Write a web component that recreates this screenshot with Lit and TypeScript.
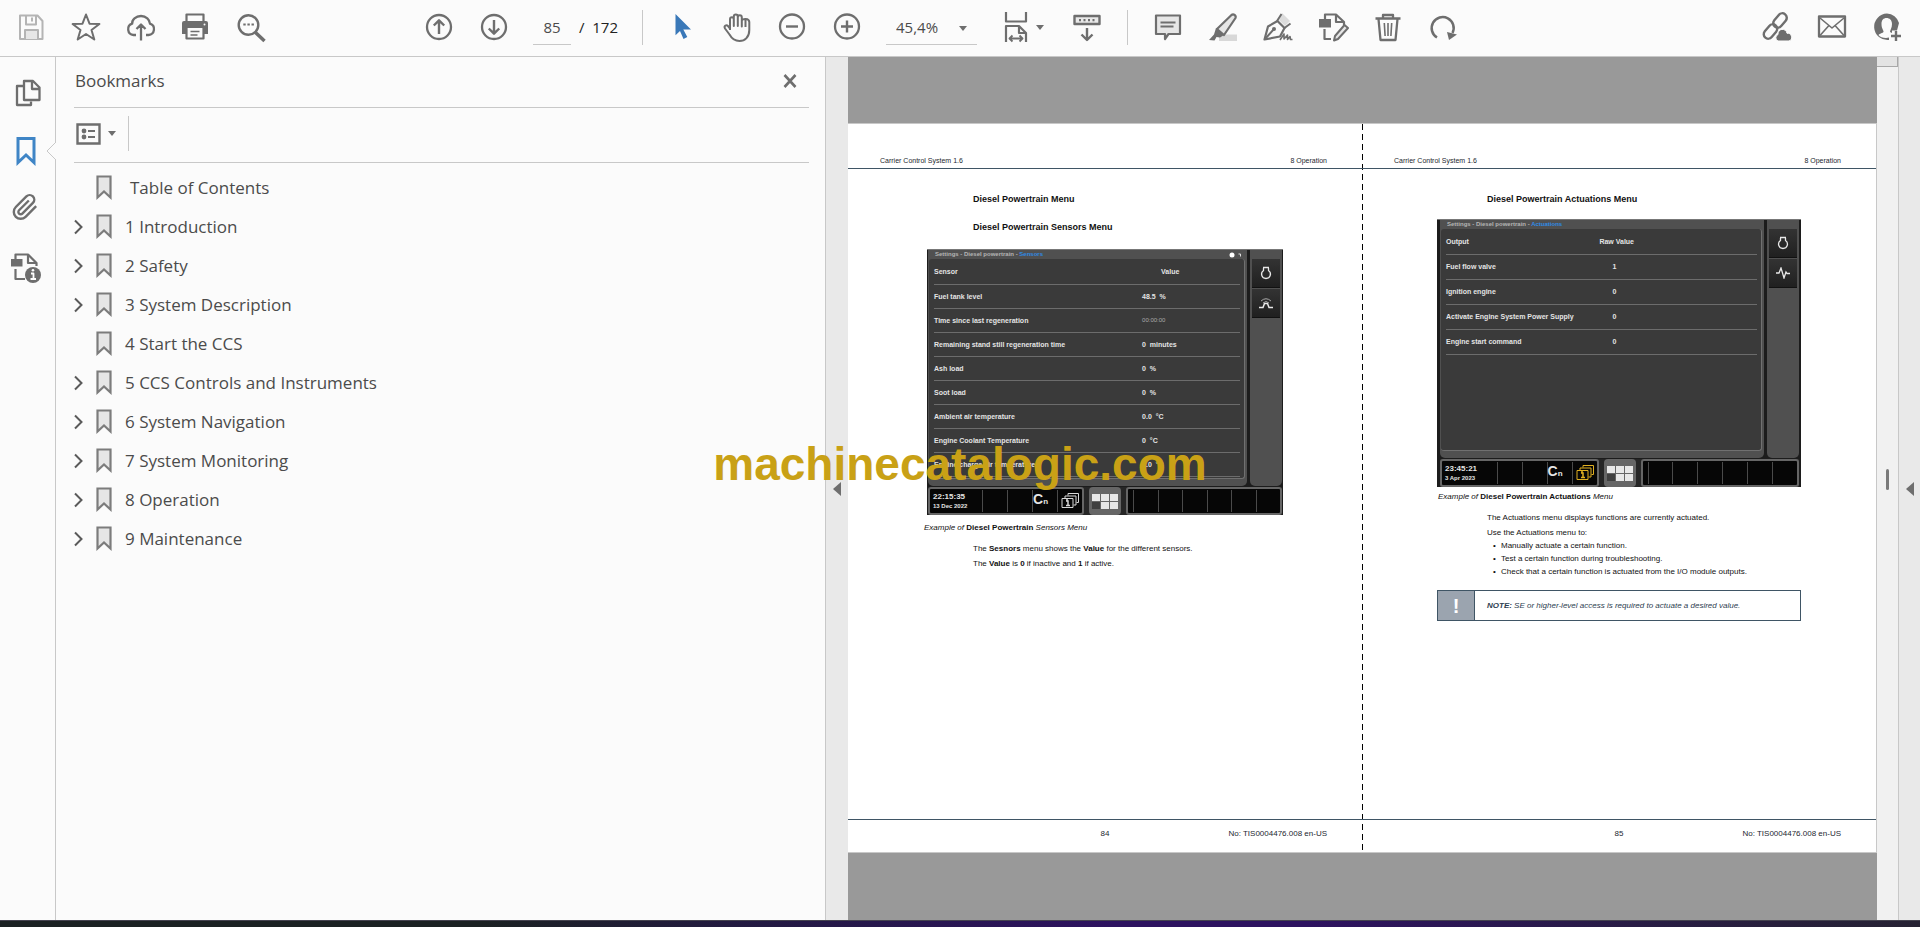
import { LitElement, html, css, svg, nothing } from "lit";
import { customElement, property } from "lit/decorators.js";
import { classMap } from "lit/directives/class-map.js";

/* ---------- icon set, 32 x 32 grid ---------- */
const icons: Record<string, unknown> = {
  save: svg`<g stroke="#b4b4b4" stroke-width="2" fill="none"><path d="M5 4.500h17.500l5 5.500v18H5z"/><path d="M11 4.500v9h10v-9M17 6.500v4"/><path d="M10 28v-9h13v9" fill="#e6e6e6"/></g>`,
  star: svg`<path d="M16 3.500l3.500 9.200 9.900.3-7.900 6 2.800 9.500L16 23l-8.300 5.500 2.800-9.500-7.900-6 9.900-.3z" stroke-width="2"/>`,
  cloud: svg`<path d="M11 24H8.500a5.800 5.800 0 0 1-1.300-11.300C6.600 8.500 11 5 16 5s8.800 3.500 9 7.700A5.800 5.800 0 0 1 23.500 24H21M16 29.500V14M11.500 18l4.500-4.500 4.500 4.500" stroke-width="2.300"/>`,
  print: svg`<path d="M6.500 10V3.500h17V10" stroke-width="2.200"/><path d="M2 12q0-2 2-2h22q2 0 2 2v11h-4.500v-6h-17v6H2z" fill="#6e6e6e" stroke="none"/><path d="M6.500 17v10.500h17V17" stroke-width="2.200"/><path d="M10.500 20.500h9M10.500 24h7" stroke-width="1.600"/><circle cx="24.500" cy="13.500" r="1" fill="#fbfbfb" stroke="none"/>`,
  search: svg`<circle cx="13.500" cy="14" r="9.800" stroke-width="2.400"/><path d="M20.500 21.500l9 8.500" stroke-width="3.500"/><path d="M8.300 13.500h2.400m1.700 0h2.400m1.700 0h2.400" stroke-width="2.200"/>`,
  up: svg`<circle cx="16" cy="16" r="12" stroke-width="2.300"/><path d="M16 23V9.500M10.800 14.500L16 9.300l5.200 5.200" stroke-width="2.400"/>`,
  down: svg`<circle cx="16" cy="16" r="12" stroke-width="2.300"/><path d="M16 9v13.500M10.800 17.500l5.200 5.200 5.200-5.200" stroke-width="2.400"/>`,
  cursor: svg`<path d="M9.500 3l15.500 15.500h-7.700l4 7.500-3.800 2-3.500-8-4.500 4.200z" fill="#3a78b8" stroke="none"/>`,
  hand: svg`<path d="M9 19V8.500c0-3 3.800-3 3.800 0V15V5.800c0-3 4-3 4 0V15V6.500c0-3 4-3 4 0V15.500V10c0-2.900 7.500-2.900 7.500 1v8c0 7-4.300 11-9.800 11-5 0-7.800-2.500-10-6.500L4 17.500c-1.500-3 1.500-4 3.200-2.200L9 17.500M24.500 9v7" stroke-width="2"/>`,
  minus: svg`<circle cx="16" cy="15.500" r="12" stroke-width="2.300"/><path d="M10 15.500h12" stroke-width="2.400"/>`,
  plus: svg`<circle cx="16" cy="15.500" r="12" stroke-width="2.300"/><path d="M10 15.500h12M16 9.500v12" stroke-width="2.400"/>`,
  fit: svg`<path d="M6 1v9.500h20V1M6 31V15h13l7 7v9M19 15v7h7" stroke-width="2.200"/><path d="M9.500 27.500h13M12.500 24.500l-3 3 3 3M19.500 24.500l3 3-3 3" stroke-width="1.800"/>`,
  keys: svg`<path d="M3.500 5h25v8h-25z" fill="#e9e9e9" stroke-width="2.400"/><path d="M8 9.200h2m2.500 0h2m2.500 0h2m2.500 0h2" stroke-width="2.200"/><path d="M16 17v11.500M10.500 23.500L16 29l5.500-5.500" stroke-width="2.400"/>`,
  comment: svg`<path d="M4 4.500h24v18.500H16.500L13 28v-5H4z" fill="#e6e6e6" stroke-width="2.200"/><path d="M8.500 11.500h15M8.500 15.500h13" stroke-width="1.800"/>`,
  marker: svg`<path d="M12 23.500h18V30H12z" fill="#d8d8d8" stroke="none"/><path d="M10 18L24.500 4c2-1.500 5 .5 4 3L17 24z" fill="#e6e6e6" stroke-width="2.200"/><path d="M9 17l8 7-4 2.500-3.500-.5-2 3.500L2 29l5-5.500z" fill="#6e6e6e" stroke="none"/>`,
  sign: svg`<path d="M20 2l8 8-5 5-6-6z" fill="#dcdcdc" stroke="none"/><path d="M2.500 28.500L6 15.500 15.500 10l7 7L18 25.500z" fill="#fbfbfb" stroke-width="2.200"/><path d="M3 28l8.500-9.500M15 10l4.500-7M22.500 17l6-4.500" stroke-width="2"/><circle cx="12" cy="18" r="2" fill="#6e6e6e" stroke="none"/><path d="M18 29l4-6v5l3.500-4v4.500l2.500-3 .5 3h2" stroke-width="1.600"/>`,
  edit: svg`<path d="M8 8V3.500h11L27 11v3M19 4v7h7M7.500 18v10H14" stroke-width="2.200"/><path d="M2 8h12v8.500H2z" fill="#6e6e6e" stroke="none"/><path d="M17 29.500l1-4.500L27.500 14l3.500 3L21 28z" fill="#e6e6e6" stroke-width="2"/>`,
  trash: svg`<path d="M3.500 7.500h25M11 7V4h10v3M6.500 8l2 21h15l2-21" stroke-width="2.300"/><path d="M12.300 12l.8 13M16 12v13M19.700 12l-.8 13" stroke-width="1.600"/>`,
  rotate: svg`<path d="M10 26.500A11 11 0 1 1 25.500 22" stroke-width="2.500"/><path d="M20 21l10 2.500-8 5.500z" fill="#6e6e6e" stroke="none"/>`,
  link: svg`<g stroke-width="2.400"><rect x="-4.500" y="-8" width="9" height="16" rx="4.500" transform="translate(19 9.500) rotate(40)"/><rect x="-4.500" y="-8" width="9" height="16" rx="4.500" transform="translate(9.500 20.500) rotate(40)"/></g><path d="M17 30a3.500 3.500 0 0 1 0-6.500 4.500 4.500 0 0 1 9-1.200A4 4 0 0 1 28 30z" fill="#6e6e6e" stroke="#fbfbfb" stroke-width="1"/>`,
  mail: svg`<path d="M3 5.500h26v20H3z" stroke-width="2.300"/><path d="M4 7l12 10L28 7M4 24.500L12.500 15M28 24.500L19.500 15" stroke-width="1.600"/>`,
  person: svg`<path d="M16 2.500a13.300 13.300 0 1 0 2 26.500v-2.500L15 27c-3 0-6.500-1-7.500-3 1-1.500 4.500-2 5-3 .5-1.500-2-3-2-8 0-4 2-6 5-6s5.500 2 5.500 6c0 4-2 6-2 8l2 1v-2.500h5L28 12A13.300 13.300 0 0 0 16 2.500z" fill="#6e6e6e" stroke="none"/><path d="M25 20v10M20 25h10" stroke-width="2.400"/>`,
  pages: svg`<path d="M12 9H5v19h14v-3.500" stroke-width="2.300"/><path d="M12 4h9l6.500 6.500V23H12zM20 4.500V12h7" stroke-width="2.300"/>`,
  mark: svg`<path d="M8 3.500h16v24l-8-7.500-8 7.500z" stroke="#3f85c6" stroke-width="3" stroke-linejoin="miter"/>`,
  clip: svg`<path transform="translate(1.500 .5) scale(1.150)" d="M21.440 11.050l-9.190 9.190a6 6 0 0 1-8.490-8.490l9.190-9.190a4 4 0 0 1 5.660 5.660l-9.200 9.190a2 2 0 0 1-2.830-2.830l8.490-8.480" stroke-width="2.100"/>`,
  info: svg`<path d="M5.500 8V3.500H18L26.500 12v3M18 4v8h8M5.500 18v10H15" stroke-width="2.200"/><path d="M1 8h11.500v7.500H1z" fill="#6e6e6e" stroke="none"/><circle cx="23" cy="24" r="8" fill="#6e6e6e" stroke="none"/><path d="M21 22.500h2.500V28M20.500 28h5.500" stroke="#fff" stroke-width="1.800"/><circle cx="23" cy="19.300" r="1.300" fill="#fff" stroke="none"/>`,
};

const icon = (name: string) => html`<svg
  class="icon" width="32" height="32" viewBox="0 0 32 32" fill="none" stroke="#6e6e6e"
  stroke-linejoin="round" aria-hidden="true">${icons[name]}</svg>`;

const caret = html`<svg class="caret" width="8" height="5" viewBox="0 0 8 5" aria-hidden="true"><path d="M0 0h8L4 5z" fill="#6e6e6e"/></svg>`;

const base = css`
  * { box-sizing: border-box; }
  button {
    appearance: none; border: 0; margin: 0; padding: 0; background: none;
    font: inherit; color: inherit; cursor: pointer;
    display: flex; align-items: center; justify-content: center;
  }
  svg { display: block; flex: none; }
`;

/* ---------- top toolbar ---------- */
@customElement("pdf-toolbar")
class PdfToolbar extends LitElement {
  static styles = [base, css`
    :host {
      display: flex; align-items: center; height: 57px;
      padding: 0 17px 2px 15px; background: #fbfbfb;
      border-bottom: 1px solid #c8c8c8; font-size: 15px;
    }
    .group { display: flex; align-items: center; gap: 23px; }
    .nav { margin-left: 156px; }
    .share { margin-left: auto; }
    .page { display: flex; align-items: center; gap: 8px; padding-right: 1px; }
    .number, .zoom select {
      appearance: none; height: 35px; margin: 0; border: 0; border-radius: 0;
      border-bottom: 1px solid #c8c8c8; background: none; outline: 0;
      font: inherit; color: #4b4b4b;
    }
    .number { width: 38px; padding: 0; text-align: center; }
    .total { white-space: pre; color: #222; }
    .bar { width: 1px; height: 35px; background: #c8c8c8; }
    .edge { margin: 0 1px; }
    .zoom { position: relative; }
    .zoom select { width: 91px; padding: 0 24px 0 10px; }
    .zoom .caret { position: absolute; right: 10px; top: 16px; pointer-events: none; }
    .split { width: 48px; gap: 4px; justify-content: flex-start; }
  `];

  private tool(name: string, label: string) {
    return html`<button class="tool" aria-label=${label}>${icon(name)}</button>`;
  }

  render() {
    return html`
      <div class="group">
        ${this.tool("save", "Save")}${this.tool("star", "Star")}
        ${this.tool("cloud", "Upload")}${this.tool("print", "Print")}
        ${this.tool("search", "Find")}
      </div>
      <div class="group nav">
        ${this.tool("up", "Previous page")}${this.tool("down", "Next page")}
        <div class="page">
          <input class="number" aria-label="Page number" value="85" />
          <span class="total">/  172</span>
        </div>
        <div class="bar"></div>
        ${this.tool("cursor", "Select")}${this.tool("hand", "Pan")}
        ${this.tool("minus", "Zoom out")}${this.tool("plus", "Zoom in")}
        <div class="zoom">
          <select aria-label="Zoom level"><option>45,4%</option></select>
          ${caret}
        </div>
        <button class="split" aria-label="Fit width">${icon("fit")}${caret}</button>
        ${this.tool("keys", "Scrolling")}
        <div class="bar edge"></div>
        ${this.tool("comment", "Comment")}${this.tool("marker", "Highlight")}
        ${this.tool("sign", "Sign")}${this.tool("edit", "Edit PDF")}
        ${this.tool("trash", "Delete")}${this.tool("rotate", "Rotate")}
      </div>
      <div class="group share">
        ${this.tool("link", "Share link")}${this.tool("mail", "Send by email")}
        ${this.tool("person", "Account")}
      </div>
    `;
  }
}

/* ---------- icon rail and bookmark tree ---------- */
interface Bookmark { title: string; open: boolean; indent?: boolean; }

const bookmarks: Bookmark[] = [
  { title: "Table of Contents", open: false, indent: true },
  { title: "1 Introduction", open: true },
  { title: "2 Safety", open: true },
  { title: "3 System Description", open: true },
  { title: "4 Start the CCS", open: false },
  { title: "5 CCS Controls and Instruments", open: true },
  { title: "6 System Navigation", open: true },
  { title: "7 System Monitoring", open: true },
  { title: "8 Operation", open: true },
  { title: "9 Maintenance", open: true },
];

@customElement("side-rail")
class SideRail extends LitElement {
  static styles = [base, css`
    :host {
      display: flex; flex-direction: column; padding-top: 7px;
      background: #fbfbfb; border-right: 1px solid #c8c8c8;
    }
    .item { position: relative; height: 58px; padding-right: 4px; }
    .wide { padding-right: 0; }
    .notch { position: absolute; right: -1px; top: 20px; }
  `];
  render() {
    return html`
      <button class="item wide" aria-label="Page thumbnails">${icon("pages")}</button>
      <button class="item" aria-label="Bookmarks">${icon("mark")}
        <svg class="notch" width="10" height="18" viewBox="0 0 10 18"><path d="M10 0L1 9l9 9" fill="#fbfbfb" stroke="#c8c8c8"/></svg>
      </button>
      <button class="item" aria-label="Attachments">${icon("clip")}</button>
      <button class="item" aria-label="Document information">${icon("info")}</button>
    `;
  }
}

@customElement("bookmark-panel")
class BookmarkPanel extends LitElement {
  static styles = [base, css`
    :host {
      display: block; overflow: hidden; background: #fbfbfb; color: #4b4b4b;
      border-right: 1px solid #c8c8c8; padding: 0 16px 0 18px; font-size: 17px;
    }
    .head {
      display: flex; align-items: center; justify-content: space-between;
      height: 51px; padding: 0 12px 2px 1px; border-bottom: 1px solid #c8c8c8;
    }
    h2 { margin: 0; font-size: 17px; font-weight: 400; }
    .tools {
      display: flex; align-items: center; gap: 12px; height: 55px;
      padding: 0 2px 3px; border-bottom: 1px solid #c8c8c8;
    }
    .options { gap: 7px; }
    .bar { width: 1px; height: 35px; background: #c8c8c8; }
    ul { list-style: none; margin: 0; padding: 5px 0 0; }
    li { display: flex; align-items: center; height: 39px; }
    .toggle { width: 22px; height: 24px; justify-content: flex-start; }
    .entry {
      display: flex; align-items: center; gap: 13px;
      color: inherit; text-decoration: none; white-space: nowrap;
    }
    .indent { gap: 18px; }
  `];
  render() {
    return html`
      <div class="head">
        <h2>Bookmarks</h2>
        <button aria-label="Close"><svg width="14" height="16" viewBox="0 0 14 16"><path d="M1.500 2l11 12M12.500 2l-11 12" stroke="#6e6e6e" stroke-width="2.600"/></svg></button>
      </div>
      <div class="tools">
        <button class="options" aria-label="Options">
          <svg width="25" height="22" viewBox="0 0 25 22"><path d="M1.500 1.500h22v19h-22z" fill="none" stroke="#6e6e6e" stroke-width="2.400"/><circle cx="8" cy="8" r="2.400" fill="#6e6e6e"/><circle cx="8" cy="14" r="2.400" fill="#6e6e6e"/><path d="M12 8h7M12 14h7" stroke="#6e6e6e" stroke-width="2"/></svg>
          ${caret}
        </button>
        <div class="bar"></div>
      </div>
      <ul>
        ${bookmarks.map((b) => html`<li>
          ${b.open
            ? html`<button class="toggle" aria-label="Expand ${b.title}"><svg width="9" height="16" viewBox="0 0 9 16"><path d="M1 1.500L7.500 8 1 14.500" fill="none" stroke="#5a5a5a" stroke-width="2"/></svg></button>`
            : html`<span class="toggle"></span>`}
          <a href="#" class=${classMap({ entry: true, indent: !!b.indent })}>
            <svg width="16" height="25" viewBox="0 0 16 25"><path d="M1.500 1.500h13v21L8 16.500l-6.500 6z" fill="#e6e6e6" stroke="#7c7c7c" stroke-width="2.200"/></svg>
            ${b.title}
          </a>
        </li>`)}
      </ul>
    `;
  }
}

/* ---------- machine display shown in the manual ---------- */
@customElement("machine-display")
class MachineDisplay extends LitElement {
  @property() section = "";
  @property() clock = "";
  @property() date = "";
  @property({ type: Boolean, reflect: true }) actuations = false;
  @property({ attribute: false }) head: string[] = [];
  @property({ attribute: false }) rows: string[][] = [];

  static styles = [base, css`
    :host {
      display: grid; grid-template-columns: minmax(0, 1fr) 32px; grid-template-rows: 1fr 28px;
      gap: 1px 3px; height: 266px; padding: 0 1px; background: #1c1c1c;
      border-top: 1px solid #777; color: #e4e4e4; overflow: hidden;
      font: 700 7px/9px "Liberation Sans", Arial, sans-serif;
    }
    :host([actuations]) { height: 268px; padding: 0 2px 0 3px; }
    .main {
      display: flex; flex-direction: column; padding: 0 2px 7px 1px;
      background: #505050; border-radius: 0 0 5px 5px;
    }
    .title {
      display: flex; align-items: center; justify-content: space-between;
      height: 9px; padding: 0 4px 0 6px; font-size: 6px; color: #b4b4b4; white-space: pre;
    }
    .title em { font-style: normal; color: #2f8be6; }
    .panel {
      flex: 1; padding: 0 4px 0 5px; background: #3a3a3a; border-radius: 3px;
      border: solid #707070; border-width: 0 1px 1px 0;
    }
    table { width: 100%; border-collapse: collapse; }
    thead tr { height: 25px; }
    tbody tr { height: 24px; }
    :host([actuations]) tr { height: 25px; }
    th, td { padding: 0; text-align: left; border-bottom: 1px solid #6c6c6c; white-space: pre; }
    th:first-child, td:first-child { width: 68%; }
    th:last-child { padding-left: 19px; }
    :host([actuations]) th:first-child, :host([actuations]) td:first-child { width: 49%; }
    :host([actuations]) th:last-child { padding-left: 1px; }
    :host([actuations]) td:last-child { padding-left: 14px; }
    td.faint { font-size: 6px; font-weight: 400; color: #aaa; }
    .strip {
      display: flex; flex-direction: column; gap: 1px; padding: 9px 2px 0;
      background: #505050; border-radius: 0 0 5px 5px;
    }
    .key { height: 29px; width: 28px; background: linear-gradient(#333, #202020); border-bottom: 1px solid #111; }
    .bar { grid-column: 1 / -1; display: flex; gap: 5px; background: #262626; }
    .box {
      flex: 1 1 0; display: grid; border: 2px solid #666; border-radius: 3px;
      background: #060606; padding: 1px 0;
    }
    .left { grid-template-columns: minmax(0, 1fr) repeat(4, 25px); }
    .right { grid-template-columns: 5px repeat(6, minmax(0, 1fr)); }
    .cell + .cell { border-left: 1px solid #4a4a4a; }
    .cell { display: flex; align-items: center; justify-content: center; min-width: 0; }
    .time { display: block; padding: 2px 0 0 3px; font-size: 8px; line-height: 10px; white-space: nowrap; }
    .time small { display: block; font-size: 6px; line-height: 8px; }
    .brand { font-size: 14px; align-items: baseline; justify-content: flex-start; line-height: 18px; }
    .brand small { font-size: 8px; }
    .home { flex: 0 0 32px; background: #666; border-radius: 4px; }
  `];

  render() {
    const badge = this.actuations ? "#e0b020" : "#d8d8d8";
    return html`
      <div class="main">
        <div class="title"><span>Settings - Diesel powertrain - <em>${this.section}</em></span>
          ${this.actuations ? nothing : html`<svg width="12" height="6" viewBox="0 0 12 6"><circle cx="3" cy="3" r="2.500" fill="#fff"/><path d="M9.500 2h2v2.500" stroke="#ddd" fill="none"/></svg>`}
        </div>
        <div class="panel">
          <table>
            <thead><tr>${this.head.map((h) => html`<th scope="col">${h}</th>`)}</tr></thead>
            <tbody>
              ${this.rows.map((r) => html`<tr>
                <td>${r[0]}</td>
                <td class=${classMap({ faint: r[1].includes(":") })}>${r[1]}</td>
              </tr>`)}
            </tbody>
          </table>
        </div>
      </div>
      <div class="strip">
        <button class="key" aria-label="Engine"><svg width="12" height="14" viewBox="0 0 12 14"><path d="M3 1.500h6M3.500 2v2.500C0 7 1.500 12.500 6 12.500S12 7 8.500 4.500V2" fill="none" stroke="#e8e8e8" stroke-width="1.300"/></svg></button>
        <button class="key" aria-label="Signals">${this.actuations
          ? html`<svg width="14" height="12" viewBox="0 0 14 12"><path d="M0 6h3l2-5 3 10 2-6 1 1.500h3" fill="none" stroke="#e8e8e8" stroke-width="1.300"/></svg>`
          : html`<svg width="14" height="12" viewBox="0 0 14 12"><path d="M0 10.500h4l1.500-4h3l1.500 4h4" fill="none" stroke="#e8e8e8" stroke-width="1.500"/><path d="M2 4q5-4.500 10 0M4 6q3-3 6 0" fill="none" stroke="#aaa"/></svg>`}</button>
      </div>
      <div class="bar">
        <div class="box left">
          <div class="cell time">${this.clock}<small>${this.date}</small></div>
          <div class="cell"></div><div class="cell"></div>
          <div class="cell brand">C<small>n</small></div>
          <div class="cell"><svg width="18" height="16" viewBox="0 0 18 16" fill="none" stroke=${badge}><path d="M1 5.500h11v9H1zM4 5V3h11v9h-2.500M7 2.500V.5h10.500v9H15.500"/><path d="M5 8h2v4M5 12.500h4M6 6v1.200" stroke-width="1.500"/></svg></div>
        </div>
        <button class="home" aria-label="Home"><svg width="26" height="15" viewBox="0 0 26 15" fill="#e8e8e8"><path d="M0 0h8v7H0zM9 0h8v7H9zM18 0h8v7h-8zM9 8h8v7H9zM18 8h8v7h-8z"/><path d="M0 8h8v7H0z" fill="#404040"/></svg></button>
        <div class="box right">${Array.from({ length: 7 }, () => html`<div class="cell"></div>`)}</div>
      </div>
    `;
  }
}

/* ---------- document spread ---------- */
const sensors = [
  ["Fuel tank level", "48.5  %"],
  ["Time since last regeneration", "00:00:00"],
  ["Remaining stand still regeneration time", "0  minutes"],
  ["Ash load", "0  %"],
  ["Soot load", "0  %"],
  ["Ambient air temperature", "0.0  °C"],
  ["Engine Coolant Temperature", "0  °C"],
  ["Engine charge air temperature", "0.0  °C"],
];

const outputs = [
  ["Fuel flow valve", "1"],
  ["Ignition engine", "0"],
  ["Activate Engine System Power Supply", "0"],
  ["Engine start command", "0"],
];

@customElement("page-spread")
class PageSpread extends LitElement {
  static styles = [base, css`
    :host {
      display: grid; grid-template-columns: 1fr 1fr; background: #fff; color: #111;
      border: solid #c8c8c8; border-width: 1px 1px 1px 0;
      font: 400 8px/10px "Liberation Sans", Arial, sans-serif;
    }
    .page { display: flex; flex-direction: column; min-width: 0; }
    .second {
      background: repeating-linear-gradient(#000 0 6px, transparent 6px 10px) left / 1px 100% no-repeat;
    }
    .header, .footer { color: #1d2730; }
    .header {
      display: flex; align-items: flex-end; justify-content: space-between; font-size: 7px;
      height: 45px; padding: 0 35px 2px 32px; border-bottom: 1px solid #3f5565;
    }
    .footer {
      display: grid; grid-template-columns: 1fr auto 1fr; align-items: center;
      height: 33px; margin-top: auto; padding: 0 35px 4px; border-top: 1px solid #3f5565;
    }
    .ref { text-align: right; }
    .footer .num { grid-column: 2; }
    h3 { margin: 24px 0 0 125px; font-size: 9px; line-height: 12px; font-weight: 700; }
    h3 + h3 { margin-top: 16px; }
    figure { margin: 16px 79px 0 76px; }
    figure machine-display { margin-left: 3px; }
    figcaption { margin-top: 8px; font-style: italic; }
    figcaption b { font-style: normal; }
    p, ul { margin: 5px 0 0 125px; }
    figure + p { margin-top: 11px; }
    .second figure { margin: 14px 75px 0; }
    .second machine-display { margin-left: 0; }
    .second figcaption { margin: 5px 0 0 1px; }
    ul { margin-top: 3px; padding-left: 14px; display: grid; gap: 3px; list-style: none; }
    li::before { content: "•"; display: inline-block; width: 8px; margin-left: -8px; }
    .note {
      display: flex; margin: 13px 75px 0; height: 31px; border: 1px solid #3f5565;
      color: #2d4050; font-style: italic; align-items: center; gap: 12px;
    }
    .mark {
      display: flex; align-items: center; justify-content: center; align-self: stretch; width: 37px;
      background: #9ba4af; border-right: 1px solid #3f5565; color: #fff;
      font: 700 20px/20px "Liberation Sans", Arial, sans-serif;
    }
  `];

  private header() {
    return html`<div class="header"><span>Carrier Control System 1.6</span><span>8 Operation</span></div>`;
  }
  private footer(n: number) {
    return html`<div class="footer"><span class="num">${n}</span><span class="ref">No: TIS0004476.008 en-US</span></div>`;
  }

  render() {
    return html`
      <article class="page">
        ${this.header()}
        <h3>Diesel Powertrain Menu</h3>
        <h3>Diesel Powertrain Sensors Menu</h3>
        <figure>
          <machine-display section="Sensors" clock="22:15:35" date="13 Dec 2022"
            .head=${["Sensor", "Value"]} .rows=${sensors}></machine-display>
          <figcaption>Example of <b>Diesel Powertrain</b> Sensors Menu</figcaption>
        </figure>
        <p>The <b>Sesnors</b> menu shows the <b>Value</b> for the different sensors.</p>
        <p>The <b>Value</b> is <b>0</b> if inactive and <b>1</b> if active.</p>
        ${this.footer(84)}
      </article>
      <article class="page second">
        ${this.header()}
        <h3>Diesel Powertrain Actuations Menu</h3>
        <figure>
          <machine-display actuations section="Actuations" clock="23:45:21" date="3 Apr 2023"
            .head=${["Output", "Raw Value"]} .rows=${outputs}></machine-display>
          <figcaption>Example of <b>Diesel Powertrain Actuations</b> Menu</figcaption>
        </figure>
        <p>The Actuations menu displays functions are currently actuated.</p>
        <p>Use the Actuations menu to:</p>
        <ul>
          <li>Manually actuate a certain function.</li>
          <li>Test a certain function during troubleshooting.</li>
          <li>Check that a certain function is actuated from the I/O module outputs.</li>
        </ul>
        <div class="note"><span class="mark">!</span><span><b>NOTE:</b> SE or higher-level access is required to actuate a desired value.</span></div>
        ${this.footer(85)}
      </article>
    `;
  }
}

/* ---------- application window ---------- */
@customElement("app-root")
class AppRoot extends LitElement {
  static styles = [base, css`
    :host {
      position: relative; display: grid; grid-template-rows: auto minmax(0, 1fr) 7px;
      height: 100vh; overflow: hidden; background: #fbfbfb; color: #4b4b4b;
      font: 400 16px/24px "Open Sans", "Noto Sans", sans-serif;
    }
    .work {
      display: grid; min-height: 0;
      grid-template-columns: 56px minmax(0, 770fr) 22px minmax(0, 1029fr) 22px 21px;
    }
    .handle { background: #e9e9e9; }
    .view { display: flex; flex-direction: column; padding: 66px 0 67px; background: #999; min-width: 0; }
    page-spread { flex: 1; }
    .scroll {
      display: flex; flex-direction: column; align-items: center; padding-bottom: 28px;
      background: #f1f1f1; border-right: 1px solid #c8c8c8;
    }
    .thumb {
      align-self: stretch; height: 10px; background: #e3e3e3;
      border: solid #a8a8a8; border-width: 0 1px 1px 0;
    }
    .grip { width: 3px; height: 21px; margin: auto; background: #7a7a7a; border-radius: 2px; }
    .task {
      border-top: 1px solid #45434f;
      background: linear-gradient(90deg, #1b2122 0 25%, #221a40 38%, #2d1260 58%, #2d1260 68%, #281c45 85%, #262233);
    }
    .watermark {
      position: absolute; left: 0; right: 0; top: 438px; text-align: center; pointer-events: none;
      color: #c9a116; font: 700 46px/52px "Liberation Sans", Arial, sans-serif;
    }
  `];

  render() {
    const tri = html`<svg width="8" height="14" viewBox="0 0 8 14"><path d="M8 0v14L0 7z" fill="#6e6e6e"/></svg>`;
    return html`
      <pdf-toolbar></pdf-toolbar>
      <div class="work">
        <side-rail></side-rail>
        <bookmark-panel></bookmark-panel>
        <button class="handle" aria-label="Collapse bookmarks">${tri}</button>
        <main class="view"><page-spread></page-spread></main>
        <div class="scroll"><div class="thumb"></div><div class="grip"></div></div>
        <button class="handle" aria-label="Expand tools">${tri}</button>
      </div>
      <div class="task"></div>
      <div class="watermark">machinecatalogic.com</div>
    `;
  }
}
